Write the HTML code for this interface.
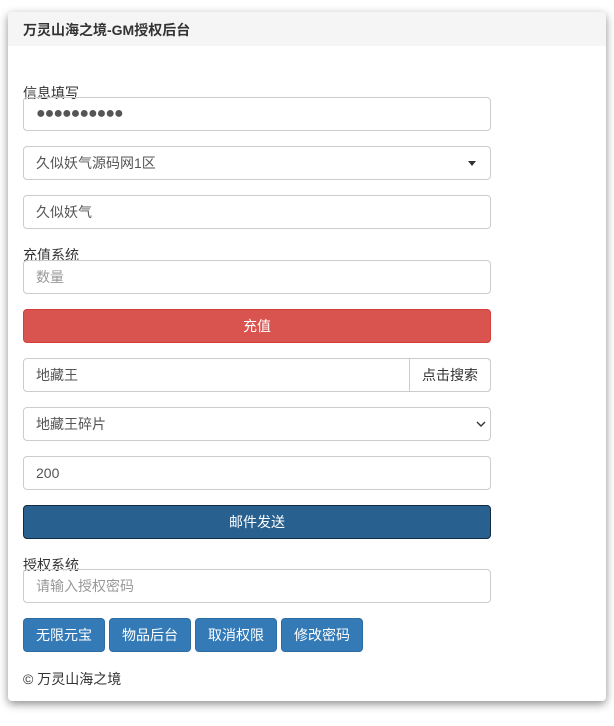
<!DOCTYPE html><html><head><meta charset="utf-8"><style>
*{box-sizing:border-box}body{margin:0;width:614px;height:726px;background:#fff;font-family:"Liberation Sans","Noto Sans CJK SC",sans-serif;font-size:14px;color:#333}
.panel{position:absolute;left:8px;top:12px;width:598px;height:689px;border-radius:4px;background:#fff;box-shadow:0 3px 9px rgba(0,0,0,.45);overflow:hidden}
.hd{height:34px;background:#f5f5f5;padding:0 15px;line-height:36px;font-weight:bold;font-size:14px}
.a{position:absolute;left:15px;width:468px;height:34px}
.in{border:1px solid #ccc;border-radius:4px;padding:0 12px;line-height:32px;color:#555}
.ph{color:#999}
.lb{position:absolute;left:15px;font-size:14px}
.btn{color:#fff;text-align:center;line-height:32px;border-radius:4px}
.sb{position:absolute;top:606px;height:34px;background:#337ab7;border:1px solid #2e6da4;border-radius:4px;color:#fff;text-align:center;line-height:32px}
</style></head><body><div class="panel">
<div class="hd">万灵山海之境-GM授权后台</div>
<div class="lb" style="top:71px">信息填写</div>
<div class="a in" style="top:85px;font-size:16px;letter-spacing:-1px">●●●●●●●●●●</div>
<div class="a in" style="top:134px">久似妖气源码网1区<span style="position:absolute;right:14px;top:14px;border-left:4px solid transparent;border-right:4px solid transparent;border-top:5px solid #333"></span></div>
<div class="a in" style="top:183px">久似妖气</div>
<div class="lb" style="top:233px">充值系统</div>
<div class="a in ph" style="top:248px">数量</div>
<div class="a btn" style="top:297px;background:#d9534f;border:1px solid #d43f3a">充值</div>
<div class="a in" style="top:346px">地藏王<span style="position:absolute;right:-1px;top:-1px;width:82px;height:34px;border:1px solid #ccc;border-radius:0 4px 4px 0;text-align:center;color:#333;line-height:32px">点击搜索</span></div>
<div class="a in" style="top:395px">地藏王碎片<svg style="position:absolute;right:4px;top:12px" width="10" height="8" viewBox="0 0 10 8"><path d="M1 2l4 4 4-4" fill="none" stroke="#333" stroke-width="1.4"/></svg></div>
<div class="a in" style="top:444px">200</div>
<div class="a btn" style="top:493px;background:#286090;border:1px solid #122b40">邮件发送</div>
<div class="lb" style="top:543px">授权系统</div>
<div class="a in ph" style="top:557px">请输入授权密码</div>
<div class="sb" style="left:15px;width:82px">无限元宝</div>
<div class="sb" style="left:101px;width:82px">物品后台</div>
<div class="sb" style="left:187px;width:82px">取消权限</div>
<div class="sb" style="left:273px;width:82px">修改密码</div>
<div class="lb" style="top:657px">© 万灵山海之境</div>
</div></body></html>
